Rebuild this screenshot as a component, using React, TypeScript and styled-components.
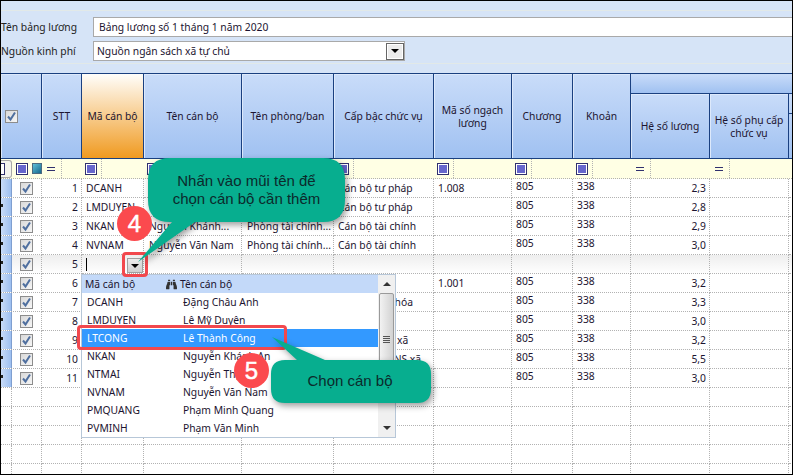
import styled, { createGlobalStyle } from "styled-components";
import { FaBinoculars } from "react-icons/fa";

const COLS = "41px 40px 62px 98px 92px 100px 78px 61px 58px 79px 79px 3px";
const FONT = `"Noto Sans", "Liberation Sans", sans-serif`;
const CALLOUT_FONT = `"Liberation Sans", sans-serif`;
const LINE = "#1a4080";
const DOT = "#b2b2b2";

const GlobalStyle = createGlobalStyle`
  html, body { margin: 0; padding: 0; background: #fff; }
  * { box-sizing: border-box; }
`;

const Frame = styled.div`
  position: relative;
  width: 793px;
  height: 475px;
  border: 1px solid #000;
  overflow: hidden;
  background: #fff;
  font-family: ${FONT};
  font-size: 10.3px;
  color: #1c1430;
`;

const FormPanel = styled.div`
  height: 72px;
  padding-top: 9px;
  background: #d6e4f7;
`;

const FormBody = styled.div`
  display: flex;
  flex-direction: column;
  gap: 4px;
  height: 54px;
  padding-top: 6px;
  border-top: 1px solid #e2e9e8;
  border-bottom: 1px solid #e2e9e8;
`;

const FormRow = styled.div`
  display: flex;
  align-items: center;
  height: 20px;
`;

const FormLabel = styled.label`
  width: 92px;
  flex: none;
  white-space: nowrap;
  color: #222;
`;

const NameInput = styled.div`
  flex: 1;
  height: 20px;
  padding: 2px 5px;
  background: #fff;
  border: 1px solid #a9a9a9;
  border-right: 0;
  line-height: 14px;
`;

const SelectBox = styled.div`
  display: flex;
  align-items: center;
  justify-content: space-between;
  width: 312px;
  height: 20px;
  padding: 0 0 0 3px;
  background: #fff;
  border: 1px solid #a9a9a9;
`;

const SelectArrow = styled.div`
  display: flex;
  align-items: center;
  justify-content: center;
  width: 18px;
  height: 17px;
  background: #ececec;
  border: 1px solid #666;
  outline: 1px solid #fff;
  outline-offset: -2px;
`;

const ArrowDown = styled.span`
  width: 0;
  height: 0;
  border-left: 4px solid transparent;
  border-right: 4px solid transparent;
  border-top: 4px solid #000;
`;

const HeaderRow = styled.div`
  display: grid;
  grid-template-columns: ${COLS};
  grid-template-rows: 20px 1fr;
  height: 86px;
  border-top: 1px solid ${LINE};
  border-bottom: 1px solid ${LINE};
`;

const HeaderCell = styled.div<{ $active?: boolean; $sub?: boolean }>`
  grid-row: ${(p) => (p.$sub ? "2" : "1 / span 2")};
  display: flex;
  align-items: center;
  justify-content: center;
  padding: 1px 3px 0;
  text-align: center;
  line-height: 13px;
  border-right: 1px solid ${LINE};
  background: ${(p) =>
    p.$active
      ? "linear-gradient(#fffefb, #f09a20)"
      : "linear-gradient(#c9dcf9, #a0c1f1)"};
  box-shadow: ${(p) => (p.$active ? "none" : "inset 1px 1px 0 #dde9fb")};
`;

const HeaderBand = styled.div`
  grid-row: 1;
  grid-column: 10 / -1;
  border-bottom: 1px solid ${LINE};
  background: linear-gradient(#c9dcf9, #a0c1f1);
`;

const HeaderSliver = styled.div`
  grid-row: 2;
  background: linear-gradient(#c9dcf9, #a0c1f1);
  padding-top: 19px;
`;

const SliverLine = styled.div`
  border-top: 1px solid ${LINE};
`;

const FilterRow = styled.div`
  display: grid;
  grid-template-columns: ${COLS};
  height: 20px;
  background: #ffffe4;
  border-bottom: 1px dotted ${DOT};
`;

const FilterCell = styled.div<{ $gap?: number }>`
  display: flex;
  align-items: center;
  margin-left: ${(p) => p.$gap ?? 0}px;
`;

const FilterOp = styled.div`
  display: flex;
  align-items: center;
  justify-content: center;
  width: 20px;
  height: 100%;
  padding-right: 1px;
  border-right: 1px dotted ${DOT};
`;

const FilterBox = styled.span`
  display: flex;
  align-items: center;
  justify-content: center;
  width: 12px;
  height: 12px;
  background: #fff;
  border: 1px solid #30306e;
`;

const FilterDot = styled.span`
  width: 8px;
  height: 8px;
  background: #6666cc;
`;

const FilterEquals = styled.span`
  width: 8px;
  height: 4px;
  border-top: 1px solid #30306e;
  border-bottom: 1px solid #30306e;
`;

const FirstFilter = styled.div`
  display: flex;
  align-items: center;
  height: 100%;
`;

const RowHandle = styled.div`
  display: flex;
  align-items: center;
  justify-content: flex-end;
  width: 11px;
  height: 18px;
  overflow: hidden;
  background: #f4f4ee;
  border: 1px solid #a8a8a8;
  border-left: 0;
  border-radius: 0 3px 3px 0;
`;

const HandleBox = styled.span`
  width: 5px;
  height: 12px;
  margin-right: 6px;
  background: #fff;
  border: 1px solid #30306e;
  border-left: 0;
`;

const TealBox = styled.span`
  width: 10px;
  height: 11px;
  margin-left: 4px;
  background: linear-gradient(135deg, #5fc0d8, #16688c);
  border: 1px solid #4c6a80;
`;

const GridRow = styled.div<{ $active?: boolean }>`
  display: grid;
  grid-template-columns: ${COLS};
  height: 19px;
  background: ${(p) => (p.$active ? "linear-gradient(#eeeeee, #ffffff)" : "#fff")};
`;

const Cell = styled.div<{ $right?: boolean; $pad?: number; $up?: boolean }>`
  display: flex;
  align-items: center;
  justify-content: ${(p) => (p.$right ? "flex-end" : "flex-start")};
  min-width: 0;
  padding-bottom: ${(p) => (p.$up ? 4 : 0)}px;
  padding-left: ${(p) => (p.$right ? 0 : p.$pad ?? 5)}px;
  padding-right: ${(p) => (p.$right ? 3 : 0)}px;
  white-space: nowrap;
  border-right: 1px dotted ${DOT};
  border-bottom: 1px dotted ${DOT};
`;

const SelectCell = styled.div`
  display: flex;
  align-items: stretch;
  height: 19px;
  border-bottom: 1px dotted ${DOT};
  border-right: 1px dotted ${DOT};
`;

const Indicator = styled.div<{ $filled: boolean; $mark: boolean }>`
  position: relative;
  width: 11px;
  background: ${(p) => (p.$filled ? "linear-gradient(90deg, #c9dcf9, #9dbff0)" : "#fff")};
  border-right: ${(p) => (p.$filled ? `1px solid #7f9fd0` : `1px dotted ${DOT}`)};
  &::after {
    content: "";
    display: ${(p) => (p.$mark ? "block" : "none")};
    position: absolute;
    left: 0;
    top: 6px;
    width: 2px;
    height: 3px;
    background: #222;
  }
`;

const CheckHolder = styled.div`
  display: flex;
  align-items: center;
  padding-left: 8px;
`;

const CheckFace = styled.span<{ $pad?: number }>`
  display: flex;
  align-items: center;
  justify-content: center;
  width: 13px;
  height: 13px;
  margin-left: ${(p) => p.$pad ?? 0}px;
  background: linear-gradient(135deg, #d9d9d9, #f6f6f6);
  border: 1px solid #8c8c8c;
`;

const Caret = styled.span`
  width: 1px;
  height: 13px;
  margin: 3px 0 0 4px;
  background: #000;
`;

const CellButton = styled.div`
  display: flex;
  align-items: center;
  justify-content: center;
  width: 16px;
  height: 15px;
  margin: 3px 0 0 auto;
  background: linear-gradient(#ececec, #cfcfcf);
  border: 1px solid #a0a0a0;
`;

const ListBox = styled.div`
  position: absolute;
  left: 80px;
  top: 273px;
  width: 315px;
  height: 164px;
  display: flex;
  background: #fff;
  border: 1px solid #b7c7d8;
`;

const ListBody = styled.div`
  flex: 1;
`;

const ListHead = styled.div`
  display: grid;
  grid-template-columns: 81px 1fr;
  align-items: center;
  height: 18px;
  padding-left: 3px;
  background: #c3d9f9;
`;

const HeadName = styled.span`
  display: flex;
  align-items: center;
  gap: 3px;
`;

const ListRow = styled.div<{ $selected?: boolean }>`
  display: grid;
  grid-template-columns: 96px 1fr;
  align-items: center;
  height: 18px;
  padding-left: 5px;
  background: ${(p) => (p.$selected ? "#3399ff" : "transparent")};
  color: ${(p) => (p.$selected ? "#fff" : "inherit")};
`;

const ScrollTrack = styled.div`
  display: flex;
  flex-direction: column;
  align-items: center;
  width: 17px;
  background: #f0f0f0;
`;

const ScrollEnd = styled.div`
  display: flex;
  align-items: center;
  justify-content: center;
  height: 18px;
  flex: none;
`;

const ScrollUp = styled.span`
  width: 0;
  height: 0;
  border-left: 4px solid transparent;
  border-right: 4px solid transparent;
  border-bottom: 4px solid #333;
`;

const ScrollDown = styled.span`
  width: 0;
  height: 0;
  border-left: 4px solid transparent;
  border-right: 4px solid transparent;
  border-top: 4px solid #333;
`;

const ScrollThumb = styled.div`
  display: flex;
  flex-direction: column;
  justify-content: center;
  align-items: center;
  gap: 1px;
  width: 15px;
  height: 92px;
  background: linear-gradient(90deg, #f2f2f2, #d2d2d2);
  border: 1px solid #9a9a9a;
  border-radius: 2px;
`;

const GripLine = styled.span`
  width: 7px;
  height: 1px;
  background: #555;
`;

const ScrollRest = styled.div`
  flex: 1;
`;

const RedFrame = styled.div<{ $x: number; $y: number; $w: number; $h: number }>`
  position: absolute;
  left: ${(p) => p.$x}px;
  top: ${(p) => p.$y}px;
  width: ${(p) => p.$w}px;
  height: ${(p) => p.$h}px;
  border: 3px solid #f2484d;
  border-radius: 4px;
`;

const Badge = styled.div<{ $x: number; $y: number }>`
  position: absolute;
  left: ${(p) => p.$x}px;
  top: ${(p) => p.$y}px;
  display: flex;
  align-items: center;
  justify-content: center;
  width: 35px;
  height: 35px;
  border-radius: 50%;
  background: #fb4a4e;
  color: #fff;
  font-family: ${CALLOUT_FONT};
  font-size: 24px;
  -webkit-text-stroke: 0.5px #fff;
`;

const Callout = styled.div<{ $x: number; $y: number; $w: number; $h: number }>`
  position: absolute;
  left: ${(p) => p.$x}px;
  top: ${(p) => p.$y}px;
  width: ${(p) => p.$w}px;
  height: ${(p) => p.$h}px;
  & svg {
    display: block;
    overflow: visible;
    filter: drop-shadow(2px 3px 3px rgba(0, 0, 0, 0.38));
  }
`;

const CalloutText = styled.div<{ $x: number; $y: number; $w: number }>`
  position: absolute;
  left: ${(p) => p.$x}px;
  top: ${(p) => p.$y}px;
  width: ${(p) => p.$w}px;
  text-align: center;
  font-family: ${CALLOUT_FONT};
  font-size: 15px;
  line-height: 18px;
  color: #0c2a2c;
`;

function Check() {
  return (
    <svg width="11" height="11" viewBox="0 0 11 11">
      <path d="M2 5.5 L4.5 8.5 L9 1.5" fill="none" stroke="#4f6f9f" strokeWidth="2" />
    </svg>
  );
}

function Filter({ kind }: { kind: "box" | "eq" }) {
  return (
    <FilterCell>
      <FilterOp>
        {kind === "box" ? (
          <FilterBox>
            <FilterDot />
          </FilterBox>
        ) : (
          <FilterEquals />
        )}
      </FilterOp>
    </FilterCell>
  );
}

const rows = [
  { no: 1, code: "DCANH", name: "", dept: "", rank: "Cán bộ tư pháp", ngach: "1.008", hs: "2,3" },
  { no: 2, code: "LMDUYEN", name: "", dept: "", rank: "Cán bộ tư pháp", ngach: "", hs: "2,8" },
  { no: 3, code: "NKAN", name: "Nguyễn Khánh...", dept: "Phòng tài chính...", rank: "Cán bộ tài chính", ngach: "", hs: "2,9" },
  { no: 4, code: "NVNAM", name: "Nguyễn Văn Nam", dept: "Phòng tài chính...", rank: "Cán bộ tài chính", ngach: "", hs: "3,0" },
  { no: 5, code: "", name: "", dept: "", rank: "", ngach: "", hs: "" },
  { no: 6, code: "", name: "", dept: "", rank: "", ngach: "1.001", hs: "3,2" },
  { no: 7, code: "", name: "", dept: "", rank: "Cán bộ văn hóa", ngach: "", hs: "3,3" },
  { no: 8, code: "", name: "", dept: "", rank: "", ngach: "", hs: "3,0" },
  { no: 9, code: "", name: "", dept: "", rank: "Bí thư đoàn xã", ngach: "", hs: "3,2" },
  { no: 10, code: "", name: "", dept: "", rank: "Cán bộ thu NS xã", ngach: "", hs: "5,5" },
  { no: 11, code: "", name: "", dept: "", rank: "", ngach: "", hs: "3,0" },
];

const staff = [
  ["DCANH", "Đặng Châu Anh"],
  ["LMDUYEN", "Lê Mỹ Duyên"],
  ["LTCONG", "Lê Thành Công"],
  ["NKAN", "Nguyễn Khánh An"],
  ["NTMAI", "Nguyễn Thị Mai"],
  ["NVNAM", "Nguyễn Văn Nam"],
  ["PMQUANG", "Phạm Minh Quang"],
  ["PVMINH", "Phạm Văn Minh"],
];

const blanks = [12, 13, 14, 15, 16];

export default function App() {
  return (
    <Frame>
      <GlobalStyle />
      <FormPanel>
        <FormBody>
          <FormRow>
            <FormLabel>Tên bảng lương</FormLabel>
            <NameInput>Bảng lương số 1 tháng 1 năm 2020</NameInput>
          </FormRow>
          <FormRow>
            <FormLabel>Nguồn kinh phí</FormLabel>
            <SelectBox>
              Nguồn ngân sách xã tự chủ
              <SelectArrow>
                <ArrowDown />
              </SelectArrow>
            </SelectBox>
          </FormRow>
        </FormBody>
      </FormPanel>

      <HeaderRow>
        <HeaderCell>
          <CheckFace $pad={-19}>
            <Check />
          </CheckFace>
        </HeaderCell>
        <HeaderCell>STT</HeaderCell>
        <HeaderCell $active>Mã cán bộ</HeaderCell>
        <HeaderCell>Tên cán bộ</HeaderCell>
        <HeaderCell>Tên phòng/ban</HeaderCell>
        <HeaderCell>Cấp bậc chức vụ</HeaderCell>
        <HeaderCell>
          <span>
            Mã số ngạch
            <br />
            lương
          </span>
        </HeaderCell>
        <HeaderCell>Chương</HeaderCell>
        <HeaderCell>Khoản</HeaderCell>
        <HeaderBand />
        <HeaderCell $sub>Hệ số lương</HeaderCell>
        <HeaderCell $sub>
          <span>
            Hệ số phụ cấp
            <br />
            chức vụ
          </span>
        </HeaderCell>
        <HeaderSliver>
          <SliverLine />
        </HeaderSliver>
      </HeaderRow>

      <FilterRow>
        <FirstFilter>
          <RowHandle>
            <HandleBox />
          </RowHandle>
          <FilterCell $gap={4}>
            <FilterBox>
              <FilterDot />
            </FilterBox>
            <TealBox />
          </FilterCell>
        </FirstFilter>
        <Filter kind="eq" />
        <Filter kind="box" />
        <Filter kind="box" />
        <Filter kind="box" />
        <Filter kind="box" />
        <Filter kind="box" />
        <Filter kind="box" />
        <Filter kind="box" />
        <Filter kind="eq" />
        <Filter kind="eq" />
        <FilterCell />
      </FilterRow>

      {rows.map((r) => (
        <GridRow key={r.no} $active={r.no === 5}>
          <SelectCell>
            <Indicator $filled $mark={r.no !== 1} />
            <CheckHolder>
              <CheckFace>
                <Check />
              </CheckFace>
            </CheckHolder>
          </SelectCell>
          <Cell $right>{r.no}</Cell>
          {r.no === 5 ? (
            <SelectCell>
              <Caret />
              <CellButton>
                <ArrowDown />
              </CellButton>
            </SelectCell>
          ) : (
            <Cell $pad={4}>{r.code}</Cell>
          )}
          <Cell $pad={5}>{r.name}</Cell>
          <Cell $pad={5}>{r.dept}</Cell>
          <Cell $pad={4}>{r.rank}</Cell>
          <Cell $pad={4}>{r.ngach}</Cell>
          <Cell $pad={4} $up={r.no !== 5}>{r.no !== 5 && "805"}</Cell>
          <Cell $pad={4} $up={r.no !== 5}>{r.no !== 5 && "338"}</Cell>
          <Cell $right>{r.hs}</Cell>
          <Cell />
          <Cell />
        </GridRow>
      ))}

      {blanks.map((n) => (
        <GridRow key={n}>
          <SelectCell>
            <Indicator $filled={false} $mark={false} />
          </SelectCell>
          {Array.from({ length: 11 }, (_, i) => (
            <Cell key={i} />
          ))}
        </GridRow>
      ))}

      <ListBox>
        <ListBody>
          <ListHead>
            <span>Mã cán bộ</span>
            <HeadName>
              <FaBinoculars size={11} color="#333" />
              Tên cán bộ
            </HeadName>
          </ListHead>
          {staff.map(([code, name]) => (
            <ListRow key={code} $selected={code === "LTCONG"}>
              <span>{code}</span>
              <span>{name}</span>
            </ListRow>
          ))}
        </ListBody>
        <ScrollTrack>
          <ScrollEnd>
            <ScrollUp />
          </ScrollEnd>
          <ScrollThumb>
            <GripLine />
            <GripLine />
            <GripLine />
            <GripLine />
          </ScrollThumb>
          <ScrollRest />
          <ScrollEnd>
            <ScrollDown />
          </ScrollEnd>
        </ScrollTrack>
      </ListBox>

      <RedFrame $x={121} $y={251} $w={26} $h={25} />
      <RedFrame $x={76} $y={324} $w={210} $h={25} />

      <Callout $x={129} $y={149} $w={225} $h={120}>
        <svg width="225" height="120" viewBox="130 150 225 120">
          <path
            d="M170 158 H323 Q345 158 345 180 V200 Q345 222 323 222 H195 L138 262 L172 222 H170 Q148 222 148 200 V180 Q148 158 170 158 Z"
            fill="#07ae8f"
          />
        </svg>
        <CalloutText $x={18} $y={22} $w={197}>
          Nhấn vào mũi tên để
          <br />
          chọn cán bộ cần thêm
        </CalloutText>
      </Callout>

      <Callout $x={261} $y={329} $w={175} $h={80}>
        <svg width="175" height="80" viewBox="262 330 175 80">
          <path
            d="M285 360 H297 L272 337 L325 360 H417 Q431 360 431 374 V389 Q431 403 417 403 H285 Q271 403 271 389 V374 Q271 360 285 360 Z"
            fill="#07ae8f"
          />
        </svg>
        <CalloutText $x={8} $y={42} $w={160}>
          Chọn cán bộ
        </CalloutText>
      </Callout>

      <Badge $x={116} $y={205}>4</Badge>
      <Badge $x={233} $y={352}>5</Badge>
    </Frame>
  );
}
